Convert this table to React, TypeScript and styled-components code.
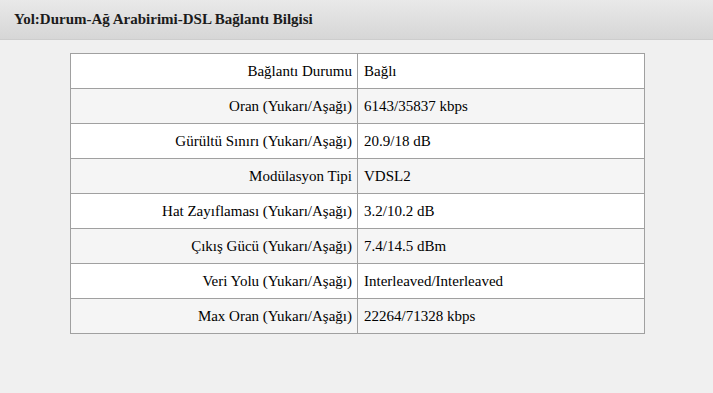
import styled, { createGlobalStyle } from "styled-components";

const GlobalStyle = createGlobalStyle`
  html, body {
    margin: 0;
    padding: 0;
    background: #f0f0f0;
  }

  body {
    font-family: "Liberation Serif", "Times New Roman", serif;
    color: #000;
  }
`;

const Page = styled.div`
  min-height: 393px;
  background: #f0f0f0;
`;

const TitleBar = styled.header`
  height: 39px;
  display: flex;
  align-items: center;
  padding: 0 14px;
  background: linear-gradient(to bottom, #e9e9e9, #d6d6d6);
  border-bottom: 1px solid #cdcdcd;
  box-sizing: content-box;
`;

const Title = styled.h1`
  margin: 0 0 1px;
  font-size: 15px;
  font-weight: bold;
  color: #1b1b1b;
`;

const Content = styled.main`
  padding-top: 13px;
`;

const InfoTable = styled.table`
  width: 575px;
  margin: 0 0 0 70px;
  border-collapse: collapse;
  font-size: 15px;
`;

const Row = styled.tr<{ $shaded: boolean }>`
  height: 35px;
  background: ${(p) => (p.$shaded ? "#f5f5f5" : "#ffffff")};
`;

const Label = styled.td`
  width: 281px;
  text-align: right;
  padding: 0 5px 0 0;
  border: 1px solid #a0a0a0;
  white-space: nowrap;
`;

const Value = styled.td`
  text-align: left;
  padding: 0 0 0 6px;
  border: 1px solid #a0a0a0;
  white-space: nowrap;
`;

type InfoRow = {
  label: string;
  value: string;
};

const rows: InfoRow[] = [
  { label: "Bağlantı Durumu", value: "Bağlı" },
  { label: "Oran (Yukarı/Aşağı)", value: "6143/35837 kbps" },
  { label: "Gürültü Sınırı (Yukarı/Aşağı)", value: "20.9/18 dB" },
  { label: "Modülasyon Tipi", value: "VDSL2" },
  { label: "Hat Zayıflaması (Yukarı/Aşağı)", value: "3.2/10.2 dB" },
  { label: "Çıkış Gücü (Yukarı/Aşağı)", value: "7.4/14.5 dBm" },
  { label: "Veri Yolu (Yukarı/Aşağı)", value: "Interleaved/Interleaved" },
  { label: "Max Oran (Yukarı/Aşağı)", value: "22264/71328 kbps" },
];

export default function App() {
  return (
    <Page>
      <GlobalStyle />
      <TitleBar>
        <Title>Yol:Durum-Ağ Arabirimi-DSL Bağlantı Bilgisi</Title>
      </TitleBar>
      <Content>
        <InfoTable>
          <tbody>
            {rows.map((row, i) => (
              <Row key={row.label} $shaded={i % 2 === 1}>
                <Label>{row.label}</Label>
                <Value>{row.value}</Value>
              </Row>
            ))}
          </tbody>
        </InfoTable>
      </Content>
    </Page>
  );
}
